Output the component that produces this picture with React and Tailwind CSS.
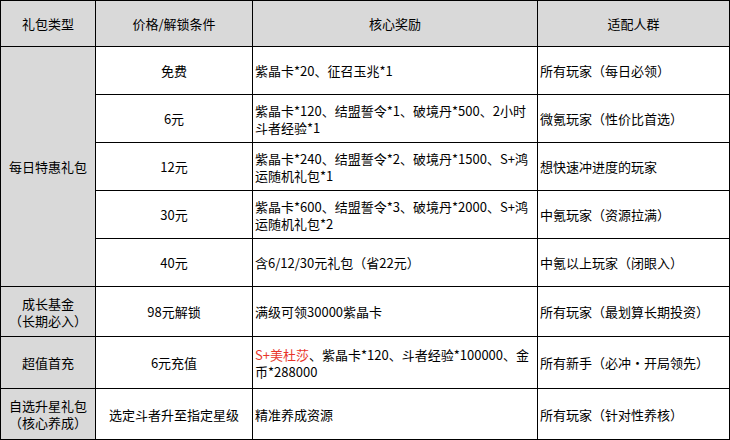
import React from 'react';

const rows = [
  { price: '免费', reward: ['紫晶卡*20、征召玉兆*1'], who: '所有玩家（每日必领）', h: 'h-[48px]' },
  { price: '6元', reward: ['紫晶卡*120、结盟誓令*1、破境丹*500、2小时', '斗者经验*1'], who: '微氪玩家（性价比首选）', h: 'h-[48px]' },
  { price: '12元', reward: ['紫晶卡*240、结盟誓令*2、破境丹*1500、S+鸿', '运随机礼包*1'], who: '想快速冲进度的玩家', h: 'h-[48px]' },
  { price: '30元', reward: ['紫晶卡*600、结盟誓令*3、破境丹*2000、S+鸿', '运随机礼包*2'], who: '中氪玩家（资源拉满）', h: 'h-[48px]' },
  { price: '40元', reward: ['含6/12/30元礼包（省22元）'], who: '中氪以上玩家（闭眼入）', h: 'h-[48px]' },
];

const cell = 'border border-black align-middle p-0';

export default function App() {
  return (
    <div className="w-[730px] h-[440px] bg-white text-[13px] leading-[17px] text-black" style={{ fontFamily: '"Noto Sans CJK SC", "Noto Sans", sans-serif' }}>
      <table className="table-fixed border-collapse w-[729px]">
        <colgroup>
          <col className="w-[95px]" />
          <col className="w-[157px]" />
          <col className="w-[285px]" />
          <col className="w-[192px]" />
        </colgroup>
        <thead>
          <tr className="h-[46px] bg-[#d9d9d9]">
            <th className={`${cell} font-normal text-center`}>礼包类型</th>
            <th className={`${cell} font-normal text-center`}>价格/解锁条件</th>
            <th className={`${cell} font-normal text-center`}>核心奖励</th>
            <th className={`${cell} font-normal text-center`}>适配人群</th>
          </tr>
        </thead>
        <tbody>
          {rows.map((r, i) => (
            <tr key={r.price} className={r.h}>
              {i === 0 && (
                <td rowSpan={5} className={`${cell} bg-[#d9d9d9] text-center`}>每日特惠礼包</td>
              )}
              <td className={`${cell} text-center`}>{r.price}</td>
              <td className={`${cell} pl-[2px] whitespace-nowrap overflow-hidden`}>
                {r.reward.map((line) => (
                  <div key={line}>{line}</div>
                ))}
              </td>
              <td className={`${cell} pl-[2px] whitespace-nowrap`}>{r.who}</td>
            </tr>
          ))}

          {/* other packs */}
          <tr className="h-[50px]">
            <td className={`${cell} bg-[#d9d9d9] text-center`}>
              <div>成长基金</div>
              <div>（长期必入）</div>
            </td>
            <td className={`${cell} text-center`}>98元解锁</td>
            <td className={`${cell} pl-[2px] whitespace-nowrap`}>满级可领30000紫晶卡</td>
            <td className={`${cell} pl-[2px] whitespace-nowrap`}>所有玩家（最划算长期投资）</td>
          </tr>
          <tr className="h-[52px]">
            <td className={`${cell} bg-[#d9d9d9] text-center`}>超值首充</td>
            <td className={`${cell} text-center`}>6元充值</td>
            <td className={`${cell} pl-[2px] whitespace-nowrap overflow-hidden`}>
              <div>
                <span className="text-[#e8352a]">S+美杜莎</span>、紫晶卡*120、斗者经验*100000、金
              </div>
              <div>币*288000</div>
            </td>
            <td className={`${cell} pl-[2px] whitespace-nowrap`}>所有新手（必冲·开局领先）</td>
          </tr>
          <tr className="h-[51px]">
            <td className={`${cell} bg-[#d9d9d9] text-center`}>
              <div>自选升星礼包</div>
              <div>（核心养成）</div>
            </td>
            <td className={`${cell} text-center`}>选定斗者升至指定星级</td>
            <td className={`${cell} pl-[2px] whitespace-nowrap`}>精准养成资源</td>
            <td className={`${cell} pl-[2px] whitespace-nowrap`}>所有玩家（针对性养核）</td>
          </tr>
        </tbody>
      </table>
    </div>
  );
}
